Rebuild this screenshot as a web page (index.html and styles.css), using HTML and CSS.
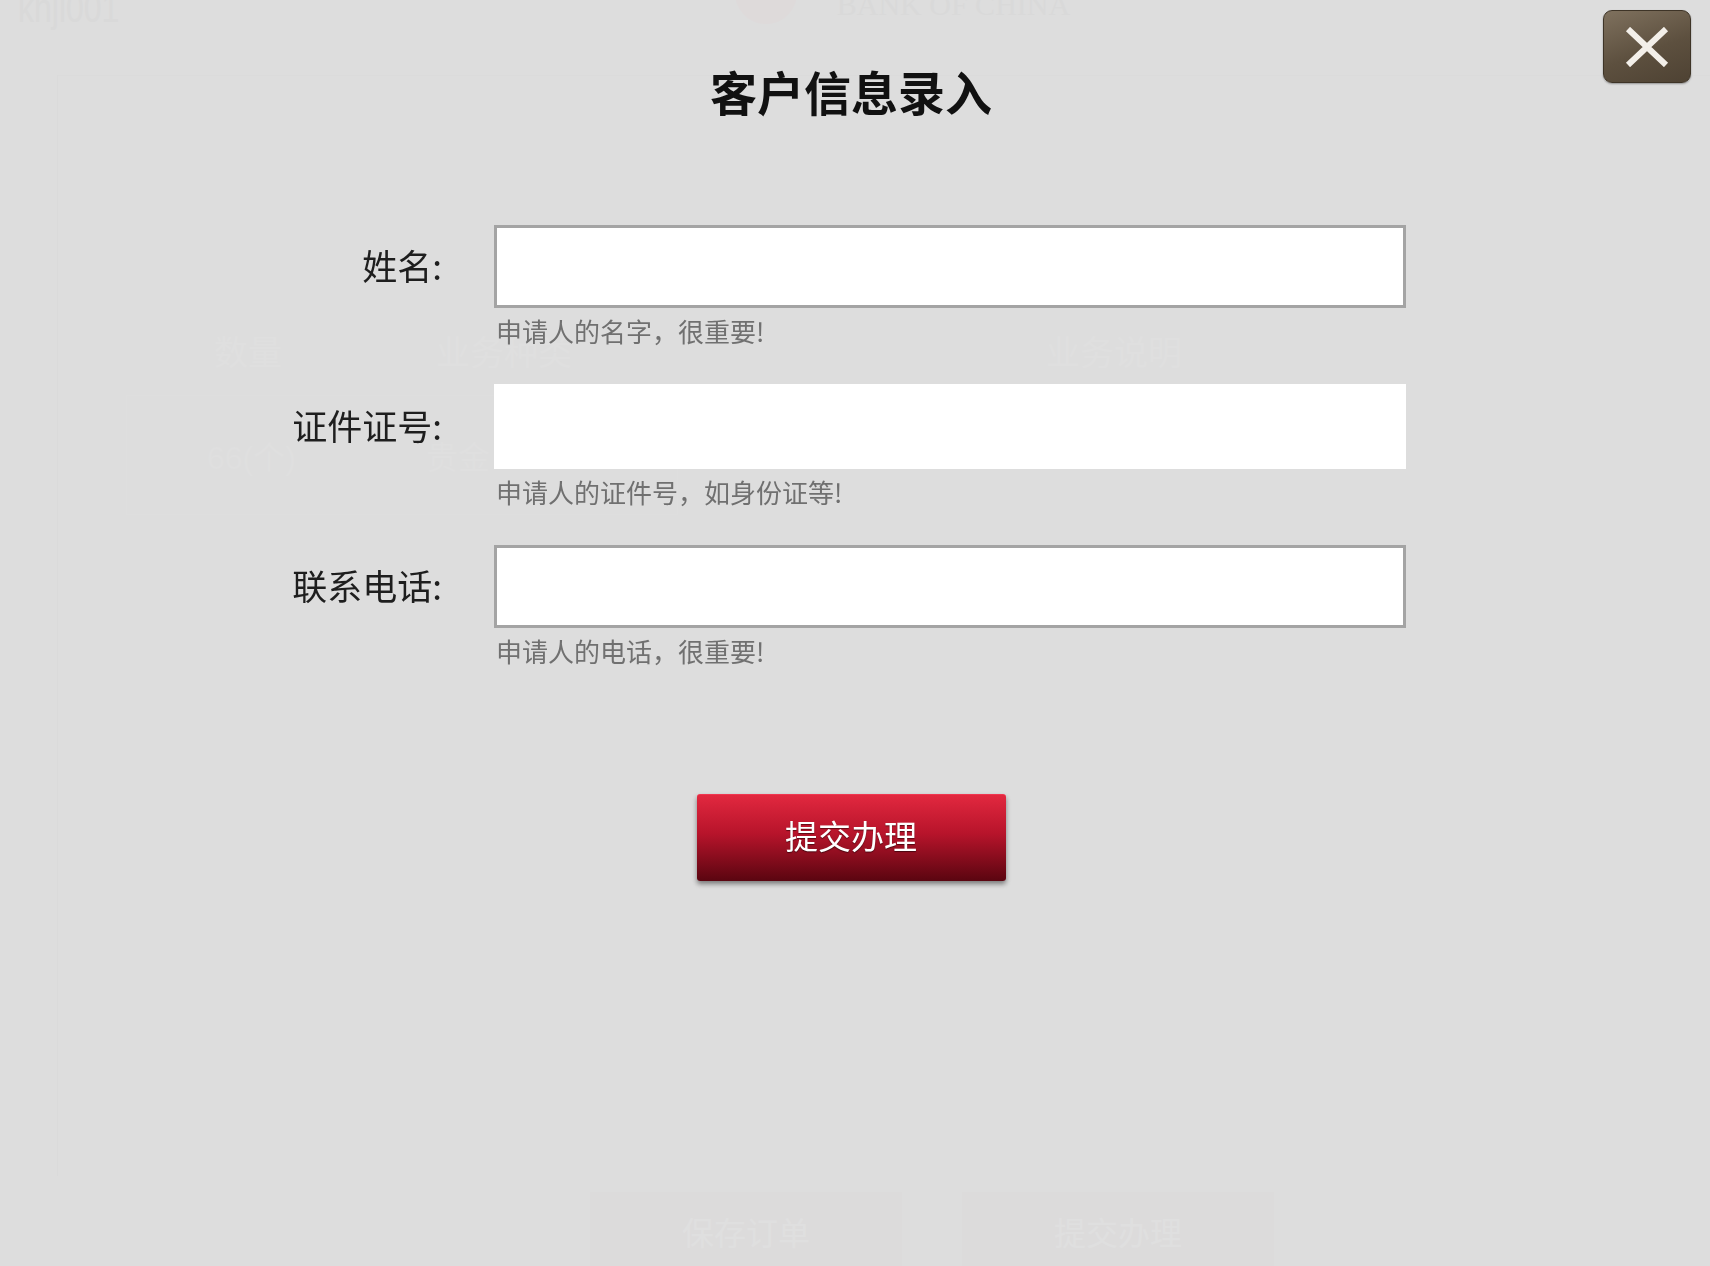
FILE: index.html
```html
<!DOCTYPE html>
<html lang="zh-CN">
<head>
    <meta charset="UTF-8">
    <meta name="viewport" content="width=device-width, initial-scale=1.0">
    <title>客户信息录入</title>
    <link rel="stylesheet" href="styles.css">
</head>
<body>
    <!-- 背后的页面（被遮罩盖住） -->
    <div class="page">
        <div class="page-top">
            <span class="user-id">khjl001</span>
            <span class="bank-logo"></span>
            <span class="bank-name">BANK OF CHINA</span>
        </div>
        <div class="panel">
            <div class="table-head">
                <span class="col-num">数量</span>
                <span class="col-type">业务种类</span>
                <span class="col-desc">业务说明</span>
            </div>
            <div class="table-row">
                <span class="cell-num">66(个)</span>
                <span class="cell-type">贵金</span>
            </div>
        </div>
        <div class="page-actions">
            <span class="ghost-btn">保存订单</span>
            <span class="ghost-btn">提交办理</span>
        </div>
    </div>

    <!-- 弹出层 -->
    <div class="dialog">
        <button class="close-btn" type="button" aria-label="关闭">
            <svg width="44" height="40" viewBox="0 0 44 40">
                <path d="M3 2 L41 38 M41 2 L3 38" stroke="#f3efe9" stroke-width="6" stroke-linecap="butt" fill="none"/>
            </svg>
        </button>

        <h1 class="dialog-title">客户信息录入</h1>

        <form class="info-form">
            <div class="field">
                <label for="custName">姓名:</label>
                <input type="text" id="custName" class="text-input">
                <p class="hint">申请人的名字，很重要!</p>
            </div>
            <div class="field">
                <label for="custId">证件证号:</label>
                <input type="text" id="custId" class="text-input plain">
                <p class="hint">申请人的证件号，如身份证等!</p>
            </div>
            <div class="field">
                <label for="custPhone">联系电话:</label>
                <input type="text" id="custPhone" class="text-input">
                <p class="hint">申请人的电话，很重要!</p>
            </div>
        </form>

        <div class="dialog-actions">
            <button type="button" class="submit-btn">提交办理</button>
        </div>
    </div>
</body>
</html>
```

FILE: styles.css
```css
html, body {
    margin: 0;
    height: 100%;
}
body {
    background-color: #dddddd;
    font-family: "Noto Sans CJK SC", "Noto Sans", sans-serif;
    overflow: hidden;
}

/* ---- 背后的页面 ---- */
.page {
    color: #d5d5d5;
    height: 1266px;
    overflow: hidden;
}
.page-top {
    height: 75px;
    display: flex;
    align-items: flex-start;
}
.user-id {
    font-family: "Liberation Sans Narrow", "Liberation Sans", sans-serif;
    font-size: 40px;
    line-height: 1;
    margin: -12px 0 0 18px;
    color: #d4d4d4;
    transform: scaleX(0.8);
    transform-origin: left top;
}
.bank-logo {
    width: 62px;
    height: 62px;
    border-radius: 50%;
    background-color: #e0d7d8;
    margin: -38px 0 0 590px;
}
.bank-name {
    font-family: "Liberation Serif", serif;
    font-size: 30px;
    line-height: 1;
    margin: -10px 0 0 40px;
    color: #d5d5d5;
}
.panel {
    margin-left: 57px;
    border-left: 1px solid #d7d7d7;
    border-top: 1px solid #d9d9d9;
    height: 1100px;
}
.table-head {
    display: flex;
    margin-top: 250px;
    font-size: 34px;
    color: #e3e3e3;
}
.col-num { margin-left: 156px; }
.col-type { margin-left: 154px; }
.col-desc { margin-left: 474px; }
.table-row {
    display: flex;
    align-items: center;
    margin: 20px 0 0 68px;
    width: 550px;
    height: 118px;
    border: 1px solid #e1e1e1;
    font-size: 32px;
    color: #e2e2e2;
}
.cell-num {
    margin-left: 80px;
    font-family: "Liberation Sans Narrow", "Liberation Sans", sans-serif;
}
.cell-type { margin-left: 130px; }
.page-actions {
    display: flex;
    gap: 60px;
    margin: 16px 0 0 590px;
}
.ghost-btn {
    box-sizing: border-box;
    width: 312px;
    height: 74px;
    padding-top: 20px;
    text-align: center;
    background-color: #dcd9da;
    color: #e3e3e3;
    font-size: 32px;
    line-height: 1.2;
}

/* ---- 弹出层 ---- */
.dialog {
    position: fixed;
    inset: 0;
    background-color: rgba(221, 221, 221, 0.55);
}
.close-btn {
    position: absolute;
    top: 10px;
    right: 19px;
    width: 88px;
    height: 73px;
    padding: 0;
    display: flex;
    align-items: center;
    justify-content: center;
    border: 1px solid #3e3427;
    border-radius: 9px;
    background: linear-gradient(160deg, #7f715e 0%, #5d503f 55%, #4e4233 100%);
    box-shadow: 0 1px 2px rgba(0, 0, 0, 0.35);
    cursor: pointer;
}
.dialog-title {
    margin: 67px 0 0;
    padding-right: 8px;
    text-align: center;
    font-size: 47px;
    line-height: 1;
    font-weight: 700;
    color: #111;
}
.info-form {
    margin-top: 111px;
    display: flex;
    flex-direction: column;
    gap: 38px;
}
.field {
    display: grid;
    grid-template-columns: 442px 912px;
    column-gap: 52px;
    align-items: center;
}
.field label {
    text-align: right;
    font-size: 35px;
    line-height: 1.2;
    padding-bottom: 4px;
    color: #1e1e1e;
}
.text-input {
    box-sizing: border-box;
    width: 912px;
    height: 83px;
    margin: 0;
    border: 3px solid #a4a4a4;
    background-color: #fff;
    font-size: 30px;
    padding: 0 14px;
    outline: none;
}
.text-input.plain {
    height: 85px;
    border: none;
}
.hint {
    grid-column: 2;
    margin: 7px 0 0 2px;
    font-size: 26px;
    line-height: 1.2;
    color: #707070;
}
.dialog-actions {
    margin-top: 127px;
    display: flex;
    justify-content: center;
    padding-right: 8px;
}
.submit-btn {
    width: 309px;
    height: 87px;
    padding: 0 0 6px;
    border: none;
    border-top: 1px solid #f0364f;
    border-radius: 3px;
    background: linear-gradient(to bottom, #e2283f 0%, #b7142b 45%, #5a0510 100%);
    box-shadow: 0 3px 5px rgba(0, 0, 0, 0.45);
    color: #fff;
    font-family: "Noto Sans CJK SC", sans-serif;
    font-size: 33px;
    text-shadow: 0 1px 1px rgba(0, 0, 0, 0.5);
    cursor: pointer;
}
```
